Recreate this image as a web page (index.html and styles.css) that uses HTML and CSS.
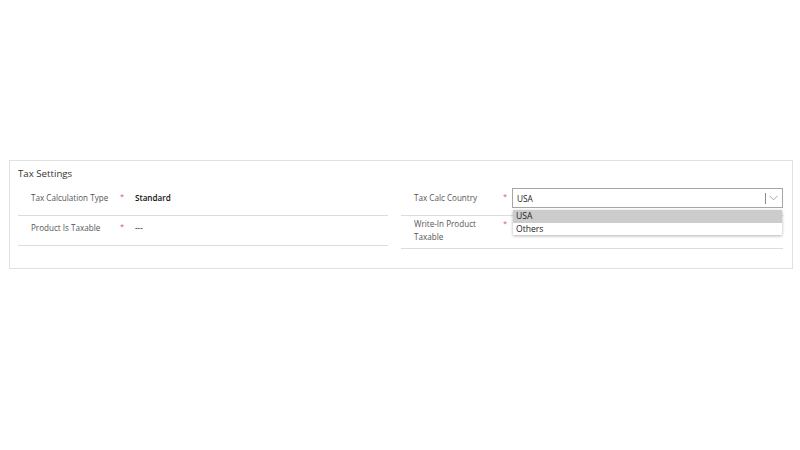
FILE: index.html
```html
<!DOCTYPE html>
<html>
<head>
<meta charset="utf-8">
<link rel="stylesheet" href="styles.css">
</head>
<body>
<div class="page">
  <section class="card">
    <h2 class="card-title">Tax Settings</h2>
    <div class="columns">
      <div class="col col-left">
        <div class="row row-first">
          <div class="label">Tax Calculation Type</div>
          <div class="star">*</div>
          <div class="value strong">Standard</div>
        </div>
        <div class="row row-second">
          <div class="label">Product Is Taxable</div>
          <div class="star">*</div>
          <div class="value">---</div>
        </div>
      </div>
      <div class="col col-right">
        <div class="row row-first">
          <div class="label">Tax Calc Country</div>
          <div class="star">*</div>
          <div class="select-wrap">
            <div class="select">
              <span class="select-text">USA</span>
              <span class="select-sep"></span>
              <svg class="chev" width="9" height="6" viewBox="0 0 9 6"><path d="M0.5 0.8 L4.5 4.8 L8.5 0.8" fill="none" stroke="#9a9a9a" stroke-width="0.9"/></svg>
            </div>
            <ul class="dropdown">
              <li class="opt opt-active">USA</li>
              <li class="opt">Others</li>
            </ul>
          </div>
        </div>
        <div class="row row-tall">
          <div class="label label-two">Write-In Product<br>Taxable</div>
          <div class="star star-two">*</div>
          <div class="value"></div>
        </div>
      </div>
    </div>
  </section>
</div>
</body>
</html>
```
FILE: styles.css
```css
html, body {
  margin: 0;
  padding: 0;
  background: #ffffff;
}
body {
  font-family: "Open Sans", "Noto Sans", sans-serif;
  color: #444;
}
.page {
  padding: 160px 7px 0 9px;
  height: 450px;
  box-sizing: border-box;
}
.card {
  width: 784px;
  box-sizing: border-box;
  border: 1px solid #e1e1e1;
  padding: 0 9px 19px 8px;
}
.card-title {
  margin: 0;
  padding-top: 6px;
  font-size: 9.7px;
  line-height: 14px;
  font-weight: 400;
  color: #333;
}
.columns {
  display: flex;
  gap: 13px;
  margin-top: 4px;
}
.col-left { width: 370px; }
.col-right { width: 382px; }
.row {
  display: flex;
  align-items: flex-start;
  box-sizing: content-box;
  border-bottom: 1px solid #dcdcdc;
  font-size: 8.1px;
}
.row-first {
  height: 28px;
  padding-top: 2px;
}
.row-second {
  height: 28px;
  padding-top: 1px;
}
.row-tall {
  height: 31px;
  padding-top: 1px;
}
.label {
  width: 89px;
  padding: 4px 0 0 13px;
  line-height: 13px;
  color: #555;
}
.label-two { padding-top: 0; }
.star {
  width: 15px;
  padding-top: 3px;
  line-height: 13px;
  color: #e05a5e;
  font-size: 7.5px;
}
.col-right .star { width: 9px; }
.star-two { padding-top: 0; }
.value {
  padding-top: 4px;
  line-height: 13px;
  color: #111;
}
.value.strong { font-weight: 600; }
.select-wrap {
  position: relative;
  flex: 1;
}
.select {
  margin-top: 1px;
  height: 20px;
  box-sizing: border-box;
  border: 1px solid #a6a6a6;
  display: flex;
  align-items: center;
  padding: 0 4px 0 4px;
}
.select-text {
  flex: 1;
  color: #222;
  font-size: 8.3px;
}
.select-sep {
  width: 1px;
  height: 11px;
  background: #8a8a8a;
  margin-right: 3px;
}
.chev { display: block; }
.dropdown {
  position: absolute;
  left: 1px;
  right: 1px;
  top: 23px;
  margin: 0;
  padding: 0;
  list-style: none;
  background: #fff;
  box-shadow: 0 1px 3px rgba(0,0,0,0.3);
  z-index: 2;
}
.opt {
  height: 12.5px;
  line-height: 12.5px;
  padding-left: 3px;
  color: #222;
  font-size: 8.6px;
}
.opt-active { background: #cccccc; }
```
